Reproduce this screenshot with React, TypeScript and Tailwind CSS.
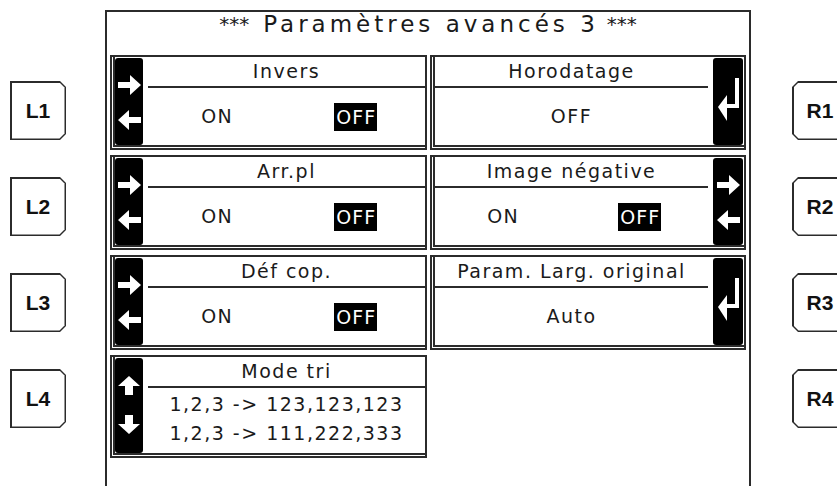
import React from 'react';

const lcd = "font-['DejaVu_Sans',sans-serif] text-[#1a1a1a]";

function Key({ label, side }: { label: string; side: 'left' | 'right' }) {
  const outer =
    side === 'left'
      ? '[clip-path:polygon(0_0,calc(100%_-_6px)_0,100%_6px,100%_calc(100%_-_6px),calc(100%_-_6px)_100%,0_100%)]'
      : '[clip-path:polygon(6px_0,100%_0,100%_100%,6px_100%,0_calc(100%_-_6px),0_6px)]';
  const inner =
    side === 'left'
      ? '[clip-path:polygon(0_0,calc(100%_-_5px)_0,100%_5px,100%_calc(100%_-_5px),calc(100%_-_5px)_100%,0_100%)]'
      : '[clip-path:polygon(5px_0,100%_0,100%_100%,5px_100%,0_calc(100%_-_5px),0_5px)]';
  return (
    <div className={`w-[56px] h-[59px] shrink-0 bg-[#2b2b2b] p-[1.5px] ${outer}`}>
      <div
        className={`h-full bg-white flex items-center justify-center font-['Liberation_Sans',sans-serif] font-bold text-[21px] text-[#111] ${inner}`}
      >
        {label}
      </div>
    </div>
  );
}

function ArrowRight() {
  return (
    <svg width="23" height="20" viewBox="0 0 23 20" className="shrink-0">
      <polygon points="0,7 12,7 12,0 23,10 12,20 12,13 0,13" fill="white" />
    </svg>
  );
}

function ArrowLeft() {
  return (
    <svg width="23" height="20" viewBox="0 0 23 20" className="shrink-0">
      <polygon points="23,7 11,7 11,0 0,10 11,20 11,13 23,13" fill="white" />
    </svg>
  );
}

function ArrowUp() {
  return (
    <svg width="22" height="19" viewBox="0 0 22 19" className="shrink-0">
      <polygon points="11,0 22,10 15,10 15,19 7,19 7,10 0,10" fill="white" />
    </svg>
  );
}

function ArrowDown() {
  return (
    <svg width="22" height="19" viewBox="0 0 22 19" className="shrink-0">
      <polygon points="11,19 22,9 15,9 15,0 7,0 7,9 0,9" fill="white" />
    </svg>
  );
}

function EnterArrow() {
  return (
    <svg width="30" height="46" viewBox="0 0 30 46" className="shrink-0">
      <rect x="22" y="2" width="4" height="30" fill="white" />
      <rect x="12" y="28" width="14" height="4" fill="white" />
      <polygon points="5,31 14,19 14,45" fill="white" />
    </svg>
  );
}

type IconKind = 'lr' | 'ud' | 'enter';

function IconBar({ kind, wide }: { kind: IconKind; wide?: boolean }) {
  return (
    <div
      className={`${wide ? 'w-[30px] mr-px' : 'w-[28px]'} mt-px shrink-0 bg-black rounded-[3px] flex flex-col items-center`}
    >
      {kind === 'lr' && (
        <>
          <div className="mt-[17px]">
            <ArrowRight />
          </div>
          <div className="mt-[15px]">
            <ArrowLeft />
          </div>
        </>
      )}
      {kind === 'ud' && (
        <>
          <div className="mt-[18px]">
            <ArrowUp />
          </div>
          <div className="mt-[20px]">
            <ArrowDown />
          </div>
        </>
      )}
      {kind === 'enter' && (
        <div className="mt-[18px]">
          <EnterArrow />
        </div>
      )}
    </div>
  );
}

function Cell({
  title,
  icon,
  side,
  tall,
  children,
}: {
  title: string;
  icon: IconKind;
  side: 'left' | 'right';
  tall?: boolean;
  children: React.ReactNode;
}) {
  return (
    <div className={`${tall ? 'h-[103px]' : 'h-[95px]'} border-2 border-[#2b2b2b] pl-px pb-px`}>
      <div className="h-full flex border-l-2 border-b-2 border-[#2b2b2b]">
        {side === 'left' && <IconBar kind={icon} />}
        <div className={`flex-1 flex flex-col ${side === 'left' ? 'ml-[5px]' : 'mr-[5px]'}`}>
          <div className="h-[31px] shrink-0 border-b-2 border-[#2b2b2b] flex items-center justify-center">
            <span className={`${lcd} text-[19px] tracking-[1.5px]`}>{title}</span>
          </div>
          <div className="flex-1 flex flex-col">{children}</div>
        </div>
        {side === 'right' && <IconBar kind={icon} wide />}
      </div>
    </div>
  );
}

function OnOff() {
  return (
    <div className="flex-1 grid grid-cols-2 items-center">
      <div className="flex justify-center">
        <span className={`${lcd} text-[19px] tracking-[1.5px]`}>ON</span>
      </div>
      <div className="flex justify-center">
        <span className="font-['DejaVu_Sans',sans-serif] text-[19px] tracking-[1px] bg-black text-white pl-[2px] pr-px leading-[28px]">
          OFF
        </span>
      </div>
    </div>
  );
}

function Single({ value }: { value: string }) {
  return (
    <div className="flex-1 flex items-center justify-center">
      <span className={`${lcd} text-[19px] tracking-[1.5px]`}>{value}</span>
    </div>
  );
}

export default function App() {
  return (
    <div className="w-[837px] h-[486px] overflow-hidden bg-white flex">
      <div className="w-[105px] shrink-0 flex flex-col gap-[37px] pt-[81px] pl-[10px]">
        <Key label="L1" side="left" />
        <Key label="L2" side="left" />
        <Key label="L3" side="left" />
        <Key label="L4" side="left" />
      </div>

      <div className="w-[646px] h-[490px] shrink-0 mt-[10px] border-l-2 border-t-2 border-r-2 border-[#2b2b2b]">
        <div className="h-[43px] flex justify-center items-start pt-px">
          <span className={`${lcd} text-[23px] leading-[23px] tracking-[4px] flex items-start`}>
            <span className="text-[20px] leading-[23px] tracking-[0px] mr-[14px]">***</span>
            Paramètres avancés 3
            <span className="text-[20px] leading-[23px] tracking-[0px] ml-[8px]">***</span>
          </span>
        </div>
        <div className="grid grid-cols-[317px_316px] gap-x-[3px] gap-y-[5px] px-[3px]">
          <Cell title="Invers" icon="lr" side="left">
            <OnOff />
          </Cell>
          <Cell title="Horodatage" icon="enter" side="right">
            <Single value="OFF" />
          </Cell>
          <Cell title="Arr.pl" icon="lr" side="left">
            <OnOff />
          </Cell>
          <Cell title="Image négative" icon="lr" side="right">
            <OnOff />
          </Cell>
          <Cell title="Déf cop." icon="lr" side="left">
            <OnOff />
          </Cell>
          <Cell title="Param. Larg. original" icon="enter" side="right">
            <Single value="Auto" />
          </Cell>
          <Cell title="Mode tri" icon="ud" side="left" tall>
            <div className="flex-1 flex flex-col pt-[2px]">
              <div className={`${lcd} text-[19px] tracking-[1.5px] h-[29px] flex items-center justify-center`}>
                1,2,3 -&gt; 123,123,123
              </div>
              <div className={`${lcd} text-[19px] tracking-[1.5px] h-[29px] flex items-center justify-center`}>
                1,2,3 -&gt; 111,222,333
              </div>
            </div>
          </Cell>
        </div>
      </div>

      <div className="shrink-0 flex flex-col gap-[37px] pt-[81px] pl-[41px]">
        <Key label="R1" side="right" />
        <Key label="R2" side="right" />
        <Key label="R3" side="right" />
        <Key label="R4" side="right" />
      </div>
    </div>
  );
}
